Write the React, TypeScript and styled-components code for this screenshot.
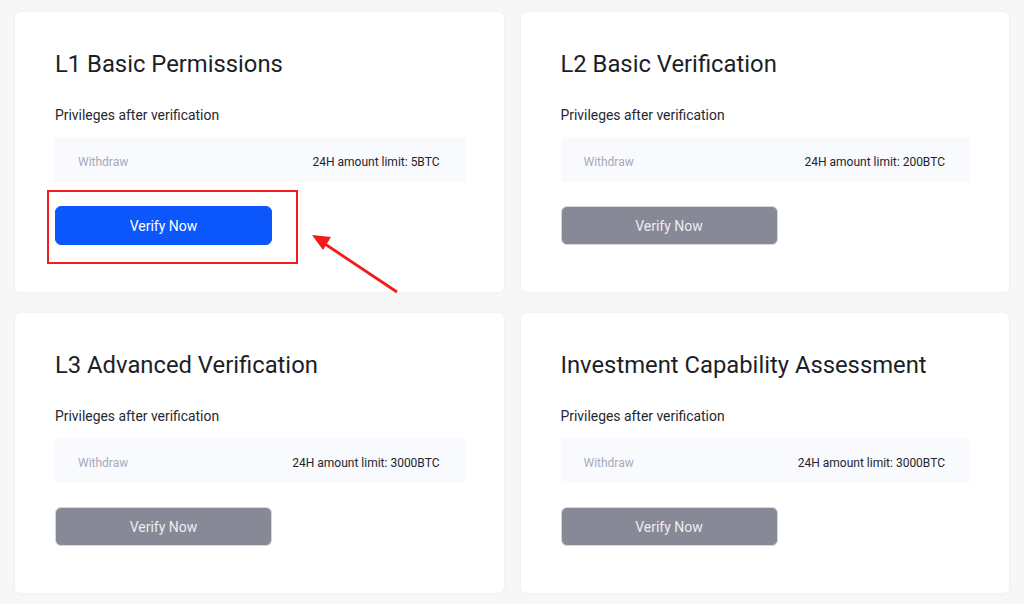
import React from 'react'
import styled, { createGlobalStyle } from 'styled-components'

const GlobalStyle = createGlobalStyle`
  html, body {
    margin: 0;
    padding: 0;
    background: #f7f7f8;
    font-family: Roboto, 'Liberation Sans', Arial, sans-serif;
  }
`

const Page = styled.div`
  position: relative;
  width: 1024px;
  height: 604px;
  box-sizing: border-box;
  padding: 12px 15px 0 15px;
  display: grid;
  grid-template-columns: 1fr 1fr;
  grid-auto-rows: 280px;
  column-gap: 17px;
  row-gap: 21px;
`

const Card = styled.div`
  background: #ffffff;
  border-radius: 6px;
  box-shadow: 0 0 4px rgba(20, 24, 40, 0.04);
  padding: 36px 39px 0 40px;
  box-sizing: border-box;
  display: flex;
  flex-direction: column;
`

const Title = styled.h2`
  margin: 0;
  font-size: 23.8px;
  line-height: 32px;
  font-weight: 400;
  color: #1d1f27;
`

const Subtitle = styled.div`
  margin-top: 25px;
  font-size: 13.9px;
  line-height: 20px;
  color: #262830;
`

const LimitRow = styled.div`
  margin-top: 12px;
  height: 45px;
  box-sizing: border-box;
  background: #f9fafd;
  display: flex;
  align-items: center;
  justify-content: space-between;
  padding: 4px 25px 0 23px;
  font-size: 12px;
`

const Label = styled.span`
  color: #a6abbb;
`

const Value = styled.span`
  color: #23252d;
`

const ButtonWrap = styled.div`
  position: relative;
  margin-top: 24px;
  align-self: flex-start;
`

const VerifyButton = styled.button<{ $active?: boolean }>`
  width: 217px;
  height: 39px;
  border-radius: 6px;
  border: 1px solid ${({ $active }) => ($active ? '#0b57fb' : '#d5d7de')};
  background: ${({ $active }) => ($active ? '#0b57fb' : '#878996')};
  color: ${({ $active }) => ($active ? '#ffffff' : '#eceef3')};
  font-family: Roboto, 'Liberation Sans', Arial, sans-serif;
  font-size: 14px;
  cursor: pointer;
`

const Highlight = styled.div`
  position: absolute;
  left: -8px;
  top: -16px;
  width: 251px;
  height: 74px;
  box-sizing: border-box;
  border: 2px solid #f21b1b;
  pointer-events: none;
`

const Arrow = styled.svg`
  position: absolute;
  left: 300px;
  top: 225px;
  pointer-events: none;
`

const levels = [
  { title: 'L1 Basic Permissions', limit: '5BTC', active: true },
  { title: 'L2 Basic Verification', limit: '200BTC', active: false },
  { title: 'L3 Advanced Verification', limit: '3000BTC', active: false },
  { title: 'Investment Capability Assessment', limit: '3000BTC', active: false },
]

const App = () => {
  return (
    <>
      <GlobalStyle />
      <Page>
        {levels.map((item) => (
          <Card key={item.title}>
            <Title>{item.title}</Title>
            <Subtitle>Privileges after verification</Subtitle>
            <LimitRow>
              <Label>Withdraw</Label>
              <Value>24H amount limit: {item.limit}</Value>
            </LimitRow>
            <ButtonWrap>
              <VerifyButton $active={item.active}>Verify Now</VerifyButton>
              {item.active && <Highlight />}
            </ButtonWrap>
          </Card>
        ))}
        <Arrow width="110" height="80" viewBox="0 0 110 80">
          <line x1="97" y1="67" x2="22" y2="17" stroke="#f21b1b" strokeWidth="2.8" />
          <polygon points="12,10 31,12 23,25" fill="#f21b1b" />
        </Arrow>
      </Page>
    </>
  )
}

export default App
